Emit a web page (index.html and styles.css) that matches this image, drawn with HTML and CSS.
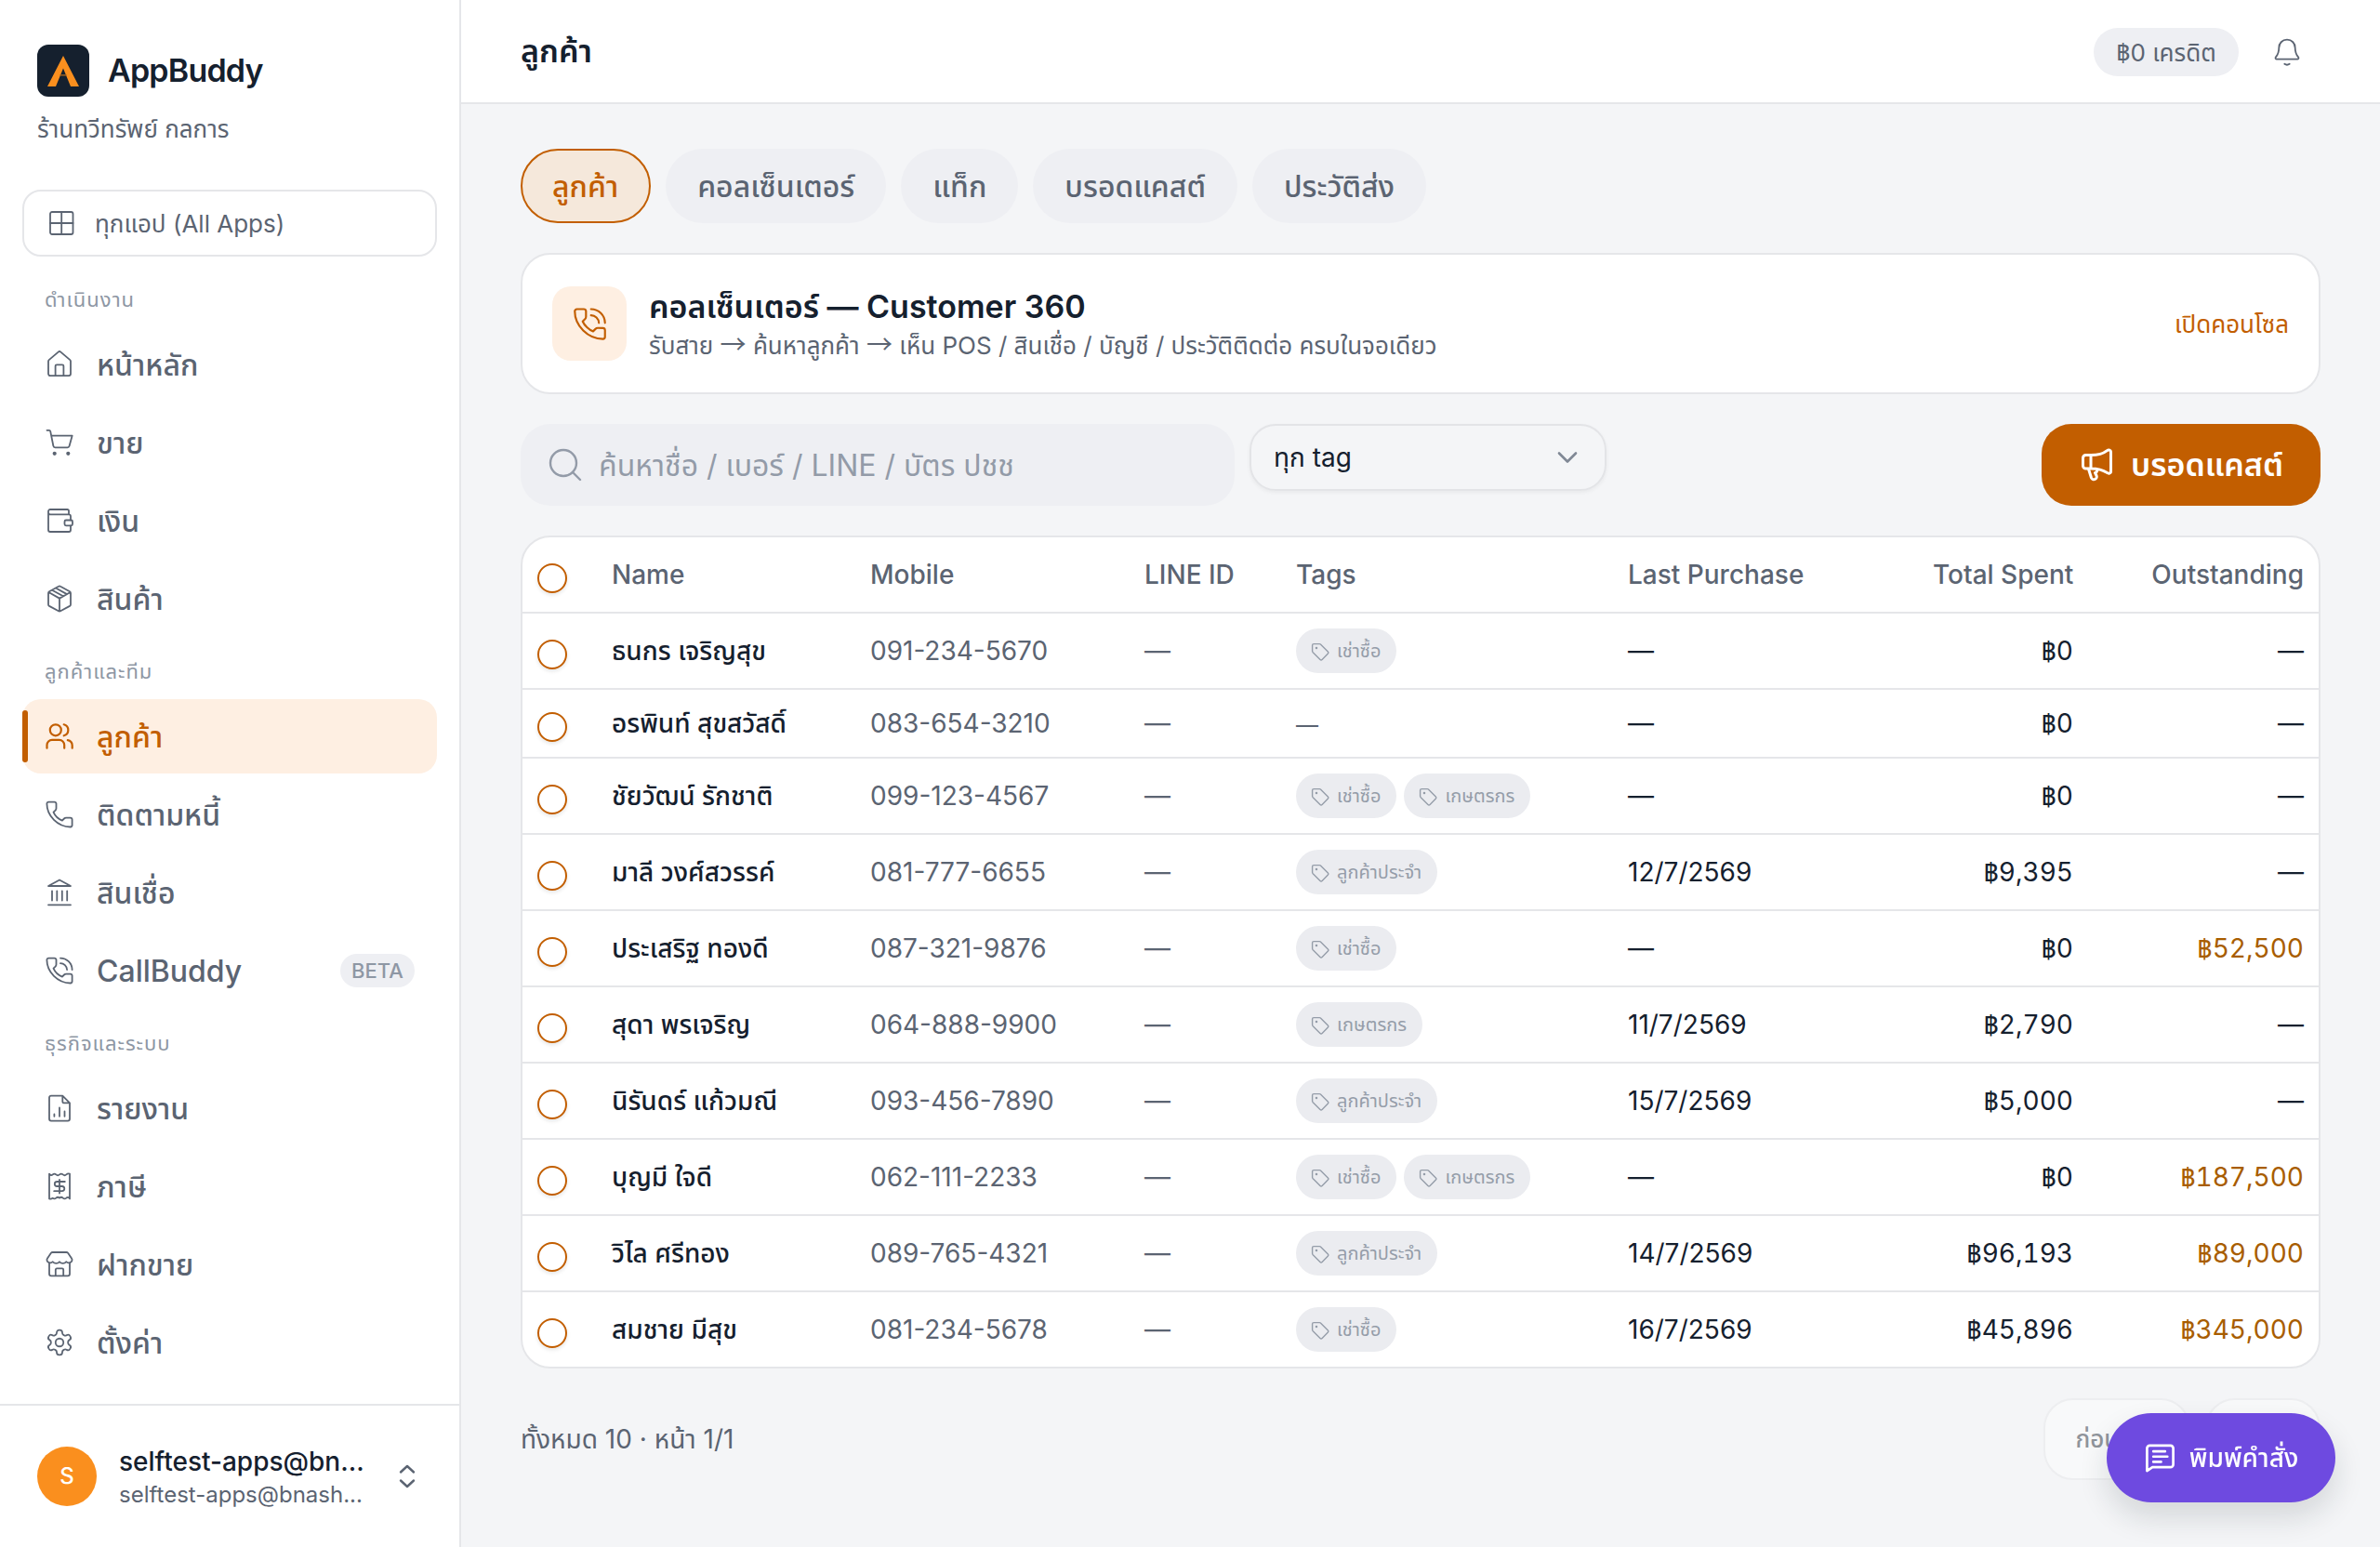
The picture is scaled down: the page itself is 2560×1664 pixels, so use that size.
FILE: index.html
```
<!DOCTYPE html>
<html lang="th">
<head>
<meta charset="UTF-8">
<meta name="viewport" content="width=device-width, initial-scale=1.0">
<title>AppBuddy</title>
<link rel="stylesheet" href="styles.css">
</head>
<body>
    <!-- shared icons -->
    <svg class="sprite">
        <symbol id="tag" viewBox="0 0 24 24">
            <path d="M3.6 5.1A1.5 1.5 0 0 1 5.1 3.6h6.2a1.6 1.6 0 0 1 1.1.4l8 8a1.5 1.5 0 0 1 0 2.1l-6.3 6.3a1.5 1.5 0 0 1-2.1 0l-8-8a1.6 1.6 0 0 1-.4-1.1z"/>
            <circle cx="8" cy="8" r=".6"/>
        </symbol>
        <symbol id="phone" viewBox="0 0 36 36">
            <path d="M6.3 4.6h6.2a2 2 0 0 1 2 1.8v5.1a3 3 0 0 1-.9 2.1l-2.1 2.1c1.5 3.4 5.6 7.5 9.4 8.9l2.1-2.1a3 3 0 0 1 2.1-.9h4.5a2 2 0 0 1 2 2v6a1.9 1.9 0 0 1-1.9 1.9C16.2 31.4 4.4 19.6 4.4 6.5a1.9 1.9 0 0 1 1.9-1.9z"/>
        </symbol>
        <symbol id="phone-call" viewBox="0 0 36 36">
            <use href="#phone"/>
            <path d="M19 4.6a12.6 12.6 0 0 1 12.6 12.4M19 10.2a7.2 7.2 0 0 1 7.1 6.8"/>
        </symbol>
    </svg>

    <div class="app">
        <aside class="sidebar">
            <div class="brand">
                <svg class="logo" viewBox="0 0 56 56">
                    <rect width="56" height="56" rx="12" fill="#15202e"/>
                    <path d="M28 12L45 45H36L28 25.500L20 45H11z" fill="#fa8f1e"/>
                    <path d="M24.500 32.800h7" stroke="#b56c1f" stroke-width="1.200"/>
                </svg>
                <span>AppBuddy</span>
            </div>
            <div class="shop">ร้านทวีทรัพย์ กลการ</div>

            <div class="all-apps">
                <svg class="icon" viewBox="0 0 36 36"><rect x="6" y="6" width="24.500" height="24" rx="2"/><path d="M18.200 6v24M6 18h24.500"/></svg>
                <span>ทุกแอป (All Apps)</span>
            </div>

            <nav>
                <div class="group">ดำเนินงาน</div>
                <a class="item">
                    <svg class="icon" viewBox="0 0 36 36"><path d="M6 14.600a2 2 0 0 1 .7-1.500l10-8.500a2 2 0 0 1 2.600 0l10 8.500a2 2 0 0 1 .7 1.500v13.500a2 2 0 0 1-2 2H8a2 2 0 0 1-2-2zM13.600 30V19.700a1.400 1.400 0 0 1 1.400-1.400h6a1.400 1.400 0 0 1 1.400 1.400V30"/></svg>
                    <span>หน้าหลัก</span>
                </a>
                <a class="item">
                    <svg class="icon" viewBox="0 0 36 36"><path d="M4.500 4.800h2.300a1.400 1.400 0 0 1 1.400 1.100l3.200 15.800a2 2 0 0 0 2 1.700h13.200a2 2 0 0 0 1.900-1.500l3.200-11.300H9.300"/><circle class="dot" cx="12.700" cy="29.800" r="2.100"/><circle class="dot" cx="27.300" cy="29.800" r="2.100"/></svg>
                    <span>ขาย</span>
                </a>
                <a class="item">
                    <svg class="icon" viewBox="0 0 36 36"><path d="M28 11.300V7.500A1.500 1.500 0 0 0 26.500 6H8a2 2 0 0 0-2 2v20a2 2 0 0 0 2 2h20a2 2 0 0 0 2-2v-4.700M6 9.300a2 2 0 0 0 2 2h20a2 2 0 0 1 2 2v4.200"/><rect x="23.500" y="17.500" width="8.500" height="5.800" rx="1.500"/></svg>
                    <span>เงิน</span>
                </a>
                <a class="item">
                    <svg class="icon" viewBox="0 0 36 36"><path d="M17 4.800a2 2 0 0 1 2 0l10 5.400a2 2 0 0 1 1 1.700v12.300a2 2 0 0 1-1 1.700l-10 5.400a2 2 0 0 1-2 0L7 25.900a2 2 0 0 1-1-1.700V11.900a2 2 0 0 1 1-1.700zM6.300 11L18 17.600 29.700 11M18 17.600v13.800M10 8.700l12 6.600M14 6.500l12 6.600"/></svg>
                    <span>สินค้า</span>
                </a>

                <div class="group">ลูกค้าและทีม</div>
                <a class="item active">
                    <svg class="icon" viewBox="0 0 36 36"><circle cx="13.800" cy="11.300" r="6"/><path d="M4.500 30.700v-3.400a5.500 5.500 0 0 1 5.500-5.500h7.700a5.500 5.500 0 0 1 5.500 5.500v3.400M22.700 5.300a6.200 6.200 0 0 1 0 12M26.800 22.200a6 6 0 0 1 4.900 5.600v2.900"/></svg>
                    <span>ลูกค้า</span>
                </a>
                <a class="item">
                    <svg class="icon"><use href="#phone"/></svg>
                    <span>ติดตามหนี้</span>
                </a>
                <a class="item">
                    <svg class="icon" viewBox="0 0 36 36"><path d="M6 11L18 4.500 30 11zM10 16.300v10.200M15.300 16.300v10.200M20.800 16.300v10.200M26.200 16.300v10.200M6 31.300h24"/></svg>
                    <span>สินเชื่อ</span>
                </a>
                <a class="item latin">
                    <svg class="icon"><use href="#phone-call"/></svg>
                    <span>CallBuddy</span>
                    <span class="beta">BETA</span>
                </a>

                <div class="group">ธุรกิจและระบบ</div>
                <a class="item">
                    <svg class="icon" viewBox="0 0 36 36"><path d="M21.300 4.600H9a2 2 0 0 0-2 2v23a2 2 0 0 0 2 2h18a2 2 0 0 0 2-2V12.300zM21.300 4.600V11a1.300 1.300 0 0 0 1.300 1.300H29M12.400 24.500v2.300M18 17.500v9.300M23.500 21.500v5.300"/></svg>
                    <span>รายงาน</span>
                </a>
                <a class="item">
                    <svg class="icon" viewBox="0 0 36 36"><path d="M7 4.600q1.800 2.600 3.700.8 1.800-1.600 3.600 0t3.700 0q1.800-1.600 3.700 0t3.600 0Q27 4 29 4.600v26.800q-1.900-2.600-3.700-.8-1.800 1.600-3.600 0t-3.700 0q-1.800-1.600-3.700 0t-3.600 0Q9 32 7 31.400zM23.800 13h-8.500a2.500 2.500 0 0 0 0 5h5.400a2.500 2.500 0 0 1 0 5.200h-8.500M18 11v14.500"/></svg>
                    <span>ภาษี</span>
                </a>
                <a class="item">
                    <svg class="icon" viewBox="0 0 36 36"><path d="M10.500 5h15a2 2 0 0 1 1.600.8l3.900 5.700a3 3 0 0 1-2 4.700 4 4 0 0 1-3.800-1 4.600 4.600 0 0 1-7.200 0 4.600 4.600 0 0 1-7.200 0 4 4 0 0 1-3.800 1 3 3 0 0 1-2-4.700l3.900-5.700a2 2 0 0 1 1.600-.8zM7 16.300v12a2 2 0 0 0 2 2h18a2 2 0 0 0 2-2v-12M13.800 30v-6.300a1.300 1.300 0 0 1 1.300-1.300h5.800a1.300 1.300 0 0 1 1.300 1.300V30"/></svg>
                    <span>ฝากขาย</span>
                </a>
                <a class="item">
                    <svg class="icon gear" viewBox="0 0 24 24"><path d="M12.220 2h-.44a2 2 0 0 0-2 2v.18a2 2 0 0 1-1 1.730l-.43.25a2 2 0 0 1-2 0l-.15-.08a2 2 0 0 0-2.730.73l-.22.38a2 2 0 0 0 .73 2.730l.15.1a2 2 0 0 1 1 1.720v.51a2 2 0 0 1-1 1.740l-.15.09a2 2 0 0 0-.73 2.730l.22.38a2 2 0 0 0 2.730.73l.15-.08a2 2 0 0 1 2 0l.43.25a2 2 0 0 1 1 1.730V20a2 2 0 0 0 2 2h.44a2 2 0 0 0 2-2v-.18a2 2 0 0 1 1-1.730l.43-.25a2 2 0 0 1 2 0l.15.08a2 2 0 0 0 2.730-.73l.22-.39a2 2 0 0 0-.73-2.730l-.15-.08a2 2 0 0 1-1-1.740v-.5a2 2 0 0 1 1-1.740l.15-.09a2 2 0 0 0 .73-2.730l-.22-.38a2 2 0 0 0-2.730-.73l-.15.08a2 2 0 0 1-2 0l-.43-.25a2 2 0 0 1-1-1.730V4a2 2 0 0 0-2-2z"/><circle cx="12" cy="12" r="3.200"/></svg>
                    <span>ตั้งค่า</span>
                </a>
            </nav>

            <div class="account">
                <div class="avatar">S</div>
                <div class="who">
                    <div class="who-name">selftest-apps@bn...</div>
                    <div class="who-mail">selftest-apps@bnash...</div>
                </div>
                <svg class="updown" viewBox="0 0 20 28"><path d="M3 9.500L10 3l7 6.500M3 18.500l7 6.500 7-6.500"/></svg>
            </div>
        </aside>

        <main>
            <header>
                <h1>ลูกค้า</h1>
                <div class="header-right">
                    <span class="credit"><span class="thb">฿</span>0 เครดิต</span>
                    <svg class="icon" viewBox="0 0 36 36"><path d="M18 4.700c-5.200 0-8.700 3.900-8.700 8.700 0 4.600-1.200 7.300-3.400 10a1.300 1.300 0 0 0 1 2.200h22.200a1.300 1.300 0 0 0 1-2.200c-2.200-2.700-3.400-5.400-3.400-10 0-4.800-3.500-8.700-8.700-8.700zM15.300 30.800q2.700 1.900 5.400 0"/></svg>
                </div>
            </header>

            <div class="content">
                <div class="tabs">
                    <a class="tab on">ลูกค้า</a>
                    <a class="tab">คอลเซ็นเตอร์</a>
                    <a class="tab">แท็ก</a>
                    <a class="tab">บรอดแคสต์</a>
                    <a class="tab">ประวัติส่ง</a>
                </div>

                <div class="card">
                    <div class="card-icon"><svg class="icon"><use href="#phone-call"/></svg></div>
                    <div class="card-text">
                        <h2>คอลเซ็นเตอร์ — Customer 360</h2>
                        <p>รับสาย <span class="arrow">→</span> ค้นหาลูกค้า <span class="arrow">→</span> เห็น POS / สินเชื่อ / บัญชี / ประวัติติดต่อ ครบในจอเดียว</p>
                    </div>
                    <a class="open">เปิดคอนโซล</a>
                </div>

                <div class="filters">
                    <div class="search">
                        <svg class="icon" viewBox="0 0 40 40"><circle cx="18" cy="18" r="14"/><path d="M28 28l8 8"/></svg>
                        <span>ค้นหาชื่อ / เบอร์ / LINE / บัตร ปชช</span>
                    </div>
                    <div class="select">
                        <span>ทุก tag</span>
                        <svg viewBox="0 0 24 24"><path d="M3 7.500l9 9 9-9"/></svg>
                    </div>
                    <button class="broadcast">
                        <svg class="icon" viewBox="0 0 40 40"><path d="M13 9.500H7.500a3 3 0 0 0-3 3V21a3 3 0 0 0 3 3H13c6 0 11.500.5 17.500 4.600 1.600 1 4 .6 4-1.400V6c0-2-2.400-2.600-4-1.400C25 9 19 9.500 13 9.500zM13 9.500V24M10.500 24.500l3 9.500a3 3 0 0 0 5.500-2.500l-1.500-3q2.500 0 2-4"/></svg>
                        <span>บรอดแคสต์</span>
                    </button>
                </div>

                <div class="table-box">
                    <table>
                        <colgroup>
                            <col class="c-check"><col class="c-name"><col class="c-mobile"><col class="c-line">
                            <col class="c-tags"><col class="c-last"><col class="c-total"><col class="c-out">
                        </colgroup>
                        <thead>
                            <tr><th><i class="check"></i></th><th>Name</th><th>Mobile</th><th>LINE ID</th><th>Tags</th><th>Last Purchase</th><th class="num">Total Spent</th><th class="num">Outstanding</th></tr>
                        </thead>
                        <tbody>
                            <tr>
                                <td><i class="check"></i></td><td class="name">ธนกร เจริญสุข</td><td class="muted">091-234-5670</td><td class="muted">—</td>
                                <td><div class="tags"><span class="tag"><svg><use href="#tag"/></svg>เช่าซื้อ</span></div></td>
                                <td>—</td><td class="num"><span class="thb">฿</span>0</td><td class="num">—</td>
                            </tr>
                            <tr class="short">
                                <td><i class="check"></i></td><td class="name">อรพินท์ สุขสวัสดิ์</td><td class="muted">083-654-3210</td><td class="muted">—</td>
                                <td class="no-tag">—</td>
                                <td>—</td><td class="num"><span class="thb">฿</span>0</td><td class="num">—</td>
                            </tr>
                            <tr>
                                <td><i class="check"></i></td><td class="name">ชัยวัฒน์ รักชาติ</td><td class="muted">099-123-4567</td><td class="muted">—</td>
                                <td><div class="tags"><span class="tag"><svg><use href="#tag"/></svg>เช่าซื้อ</span><span class="tag"><svg><use href="#tag"/></svg>เกษตรกร</span></div></td>
                                <td>—</td><td class="num"><span class="thb">฿</span>0</td><td class="num">—</td>
                            </tr>
                            <tr>
                                <td><i class="check"></i></td><td class="name">มาลี วงศ์สวรรค์</td><td class="muted">081-777-6655</td><td class="muted">—</td>
                                <td><div class="tags"><span class="tag"><svg><use href="#tag"/></svg>ลูกค้าประจำ</span></div></td>
                                <td>12/7/2569</td><td class="num"><span class="thb">฿</span>9,395</td><td class="num">—</td>
                            </tr>
                            <tr>
                                <td><i class="check"></i></td><td class="name">ประเสริฐ ทองดี</td><td class="muted">087-321-9876</td><td class="muted">—</td>
                                <td><div class="tags"><span class="tag"><svg><use href="#tag"/></svg>เช่าซื้อ</span></div></td>
                                <td>—</td><td class="num"><span class="thb">฿</span>0</td><td class="num due"><span class="thb">฿</span>52,500</td>
                            </tr>
                            <tr>
                                <td><i class="check"></i></td><td class="name">สุดา พรเจริญ</td><td class="muted">064-888-9900</td><td class="muted">—</td>
                                <td><div class="tags"><span class="tag"><svg><use href="#tag"/></svg>เกษตรกร</span></div></td>
                                <td>11/7/2569</td><td class="num"><span class="thb">฿</span>2,790</td><td class="num">—</td>
                            </tr>
                            <tr>
                                <td><i class="check"></i></td><td class="name">นิรันดร์ แก้วมณี</td><td class="muted">093-456-7890</td><td class="muted">—</td>
                                <td><div class="tags"><span class="tag"><svg><use href="#tag"/></svg>ลูกค้าประจำ</span></div></td>
                                <td>15/7/2569</td><td class="num"><span class="thb">฿</span>5,000</td><td class="num">—</td>
                            </tr>
                            <tr>
                                <td><i class="check"></i></td><td class="name">บุญมี ใจดี</td><td class="muted">062-111-2233</td><td class="muted">—</td>
                                <td><div class="tags"><span class="tag"><svg><use href="#tag"/></svg>เช่าซื้อ</span><span class="tag"><svg><use href="#tag"/></svg>เกษตรกร</span></div></td>
                                <td>—</td><td class="num"><span class="thb">฿</span>0</td><td class="num due"><span class="thb">฿</span>187,500</td>
                            </tr>
                            <tr>
                                <td><i class="check"></i></td><td class="name">วิไล ศรีทอง</td><td class="muted">089-765-4321</td><td class="muted">—</td>
                                <td><div class="tags"><span class="tag"><svg><use href="#tag"/></svg>ลูกค้าประจำ</span></div></td>
                                <td>14/7/2569</td><td class="num"><span class="thb">฿</span>96,193</td><td class="num due"><span class="thb">฿</span>89,000</td>
                            </tr>
                            <tr>
                                <td><i class="check"></i></td><td class="name">สมชาย มีสุข</td><td class="muted">081-234-5678</td><td class="muted">—</td>
                                <td><div class="tags"><span class="tag"><svg><use href="#tag"/></svg>เช่าซื้อ</span></div></td>
                                <td>16/7/2569</td><td class="num"><span class="thb">฿</span>45,896</td><td class="num due"><span class="thb">฿</span>345,000</td>
                            </tr>
                        </tbody>
                    </table>
                </div>

                <div class="pager">
                    <span>ทั้งหมด 10 · หน้า 1/1</span>
                    <div class="pager-buttons">
                        <button disabled>ก่อนหน้า</button>
                        <button disabled>ถัดไป</button>
                    </div>
                </div>
            </div>
        </main>

        <button class="fab">
            <svg viewBox="0 0 36 36"><path d="M3.500 32V7a3 3 0 0 1 3-3h23a3 3 0 0 1 3 3v18a3 3 0 0 1-3 3H9.500zM10.500 10.500h13M10.500 16.200h15.500M10.500 22h8.500"/></svg>
            <span>พิมพ์คำสั่ง</span>
        </button>
    </div>
</body>
</html>
```
FILE: styles.css
```
* {
    box-sizing: border-box;
}
body {
    margin: 0;
    font-family: Inter, "Noto Sans Thai", sans-serif;
    font-size: 28px;
    color: #15202e;
    background-color: #f4f5f7;
}
h1, h2, p {
    margin: 0;
}
button {
    font-family: inherit;
    border: none;
}
svg {
    fill: none;
    stroke: currentColor;
    stroke-linecap: round;
    stroke-linejoin: round;
    flex-shrink: 0;
}
.sprite {
    display: none;
}
.icon {
    width: 36px;
    height: 36px;
    stroke-width: 1.8;
}
.dot {
    fill: currentColor;
    stroke: none;
}
.thb {
    font-family: "Noto Sans Thai", sans-serif;
    line-height: 1;
}
.app {
    display: flex;
    height: 1664px;
    overflow: hidden;
}

/* sidebar */
.sidebar {
    width: 496px;
    flex-shrink: 0;
    display: flex;
    flex-direction: column;
    background-color: #fff;
    border-right: 2px solid #e5e6e9;
}
.brand {
    display: flex;
    align-items: center;
    gap: 20px;
    margin: 48px 40px 0;
    font-size: 34px;
    font-weight: 600;
    letter-spacing: -0.8px;
}
.brand span {
    padding-bottom: 2px;
}
.logo {
    width: 56px;
    height: 56px;
    stroke: none;
}
.shop {
    height: 40px;
    line-height: 40px;
    margin: 15px 40px 0;
    font-size: 26px;
    color: #5b6472;
}
.all-apps {
    display: flex;
    align-items: center;
    gap: 18px;
    height: 72px;
    margin: 45px 24px 8px;
    padding: 0 22px;
    border: 2px solid #e5e6e9;
    border-radius: 20px;
    font-size: 26px;
    color: #5b6472;
}
.all-apps span {
    padding-top: 3px;
}
nav {
    flex: 1;
    padding: 0 24px;
}
.group {
    height: 68px;
    padding: 24px 24px 0;
    line-height: 28px;
    font-size: 22px;
    letter-spacing: 1px;
    color: #8e97a4;
}
.item {
    position: relative;
    display: flex;
    align-items: center;
    gap: 22px;
    height: 80px;
    padding: 0 24px 0 22px;
    border-radius: 20px;
    font-size: 32px;
    font-weight: 500;
    color: #5b6472;
}
.item + .item {
    margin-top: 4px;
}
.item span {
    padding-top: 3px;
}
.item.latin span {
    padding-top: 0;
}
.item.active {
    background-color: #feefe2;
    color: #c25e00;
}
.item.active .icon {
    stroke-width: 2.2;
}
.item.active::before {
    content: "";
    position: absolute;
    left: 0;
    top: 12px;
    width: 6px;
    height: 56px;
    border-radius: 3px;
    background-color: #c25e00;
}
.item .gear {
    padding: 2px;
    stroke-width: 1.35;
}
.beta {
    margin-left: auto;
    width: 80px;
    line-height: 36px;
    border-radius: 18px;
    background-color: #eeeff3;
    text-align: center;
    font-size: 22px;
    color: #8e97a4;
}
.account {
    display: flex;
    align-items: center;
    height: 154px;
    padding: 0 46px 0 40px;
    border-top: 2px solid #e5e6e9;
}
.avatar {
    width: 64px;
    height: 64px;
    line-height: 64px;
    border-radius: 50%;
    background-color: #fa8f1e;
    color: #fff;
    text-align: center;
    font-size: 24px;
    font-weight: 500;
}
.who {
    margin-left: 24px;
    margin-right: auto;
    padding-top: 2px;
    white-space: nowrap;
}
.who-name {
    line-height: 38px;
    font-size: 28px;
    font-weight: 500;
}
.who-mail {
    line-height: 34px;
    font-size: 24px;
    color: #5b6472;
}
.updown {
    width: 20px;
    height: 28px;
    stroke-width: 2.4;
    color: #5b6472;
}

/* header */
main {
    flex: 1;
}
header {
    display: flex;
    align-items: center;
    justify-content: space-between;
    height: 112px;
    padding: 2px 82px 0 64px;
    background-color: #fff;
    border-bottom: 2px solid #e5e6e9;
}
h1 {
    font-size: 34px;
    font-weight: 600;
}
.header-right {
    display: flex;
    align-items: center;
    gap: 34px;
    color: #5b6472;
}
.credit {
    width: 156px;
    height: 52px;
    line-height: 54px;
    border-radius: 26px;
    background-color: #eeeff3;
    text-align: center;
    font-size: 26px;
}

/* content */
.content {
    padding: 48px 64px 0;
}
.tabs {
    display: flex;
    gap: 16px;
}
.tab {
    height: 80px;
    line-height: 78px;
    padding: 0 32px;
    border: 2px solid transparent;
    border-radius: 40px;
    background-color: #eeeff3;
    font-size: 32px;
    font-weight: 500;
    color: #5b6472;
}
.tab.on {
    padding-right: 33px;
    border-color: #c25e00;
    background-color: #f5e8db;
    color: #c25e00;
}
.card {
    display: flex;
    align-items: center;
    height: 152px;
    margin-top: 32px;
    padding: 0 32px;
    background-color: #fff;
    border: 2px solid #e5e6e9;
    border-radius: 32px;
}
.card-icon {
    display: flex;
    align-items: center;
    justify-content: center;
    width: 80px;
    height: 80px;
    border-radius: 20px;
    background-color: #feefe2;
    color: #c25e00;
}
.card-icon .icon {
    width: 43px;
    height: 43px;
}
.card-text {
    flex: 1;
    margin-left: 24px;
    padding-top: 4px;
}
.card h2 {
    line-height: 44px;
    font-size: 34px;
    font-weight: 600;
}
.card p {
    line-height: 40px;
    font-size: 26px;
    color: #5b6472;
}
.arrow {
    font-family: "Noto Sans CJK SC", sans-serif;
    font-size: 28px;
    line-height: 1;
}
.open {
    padding-top: 3px;
    font-size: 26px;
    color: #c25e00;
}
.filters {
    display: flex;
    align-items: flex-start;
    gap: 16px;
    margin-top: 32px;
}
.search {
    display: flex;
    align-items: center;
    gap: 16px;
    width: 768px;
    height: 88px;
    padding: 0 28px;
    border-radius: 32px;
    background-color: #eeeff3;
    font-size: 32px;
    color: #939ba8;
}
.search span {
    padding-top: 3px;
}
.search .icon {
    width: 40px;
    height: 40px;
    stroke-width: 2.4;
}
.select {
    display: flex;
    align-items: center;
    justify-content: space-between;
    width: 384px;
    height: 72px;
    padding: 0 28px 0 24px;
    border: 2px solid #e3e4e7;
    border-radius: 28px;
    box-shadow: 0 2px 4px rgba(0, 0, 0, 0.05);
    font-size: 28px;
}
.select span {
    padding-top: 2px;
}
.select svg {
    width: 24px;
    height: 24px;
    stroke-width: 2.6;
    color: #808895;
}
.broadcast {
    display: flex;
    align-items: center;
    justify-content: center;
    gap: 16px;
    width: 300px;
    height: 88px;
    margin-left: auto;
    border-radius: 32px;
    background-color: #c25e00;
    color: #fff;
    font-size: 34px;
    font-weight: 600;
}
.broadcast span {
    padding-top: 2px;
}
.broadcast .icon {
    width: 40px;
    height: 40px;
    stroke-width: 3;
}

/* customer table */
.table-box {
    margin-top: 32px;
    border: 2px solid #e5e6e9;
    border-radius: 32px;
    background-color: #fff;
    overflow: hidden;
}
table {
    width: 100%;
    table-layout: fixed;
    border-collapse: separate;
    border-spacing: 0;
}
.c-check { width: 80px; }
.c-name { width: 278px; }
.c-mobile { width: 295px; }
.c-line { width: 163px; }
.c-tags { width: 357px; }
.c-last { width: 328px; }
.c-total { width: 183px; }
.c-out { width: 248px; }
th, td {
    height: 82px;
    padding: 0 16px;
    border-bottom: 2px solid #e5e6e9;
    text-align: left;
    white-space: nowrap;
}
th {
    font-weight: 500;
    color: #5b6472;
}
.short td {
    height: 74px;
}
tbody tr:last-child td {
    height: 80px;
    border-bottom: none;
}
.num {
    text-align: right;
}
td.num {
    font-variant-numeric: tabular-nums;
}
.name {
    padding-top: 2px;
    font-weight: 500;
}
.muted {
    color: #5b6472;
}
.no-tag {
    padding-top: 2px;
    font-size: 24px;
    color: #5b6472;
}
.due {
    color: #a85d00;
}
.check {
    display: block;
    width: 32px;
    height: 32px;
    margin-top: 8px;
    border: 2px solid #c25e00;
    border-radius: 50%;
    box-shadow: 0 2px 4px rgba(0, 0, 0, 0.1);
}
.tags {
    display: flex;
    gap: 8px;
}
.tag {
    display: flex;
    align-items: center;
    gap: 6px;
    height: 48px;
    padding: 1px 17px 0 14px;
    border-radius: 24px;
    background-color: #ebecf0;
    font-size: 20px;
    color: #959da9;
}
.tag svg {
    width: 24px;
    height: 24px;
    stroke-width: 1.4;
}

.pager {
    display: flex;
    align-items: center;
    justify-content: space-between;
    margin-top: 32px;
    color: #5b6472;
    font-size: 28px;
}
.pager > span {
    padding-top: 3px;
}
.pager-buttons {
    display: flex;
    gap: 16px;
}
.pager-buttons button {
    height: 88px;
    padding: 2px 32px 0;
    border: 2px solid #e5e6e9;
    border-radius: 32px;
    background-color: #fff;
    font-size: 26px;
    font-weight: 500;
    color: #15202e;
    opacity: 0.45;
}
.fab {
    position: fixed;
    right: 48px;
    bottom: 48px;
    display: flex;
    align-items: center;
    justify-content: center;
    gap: 14px;
    width: 246px;
    height: 96px;
    border-radius: 48px;
    background-color: #6e4ae0;
    box-shadow: 0 16px 32px rgba(21, 32, 46, 0.14);
    color: #fff;
    font-size: 28px;
    font-weight: 500;
}
.fab span {
    padding-top: 2px;
}
.fab svg {
    width: 35px;
    height: 35px;
    stroke-width: 2.8;
}
```
